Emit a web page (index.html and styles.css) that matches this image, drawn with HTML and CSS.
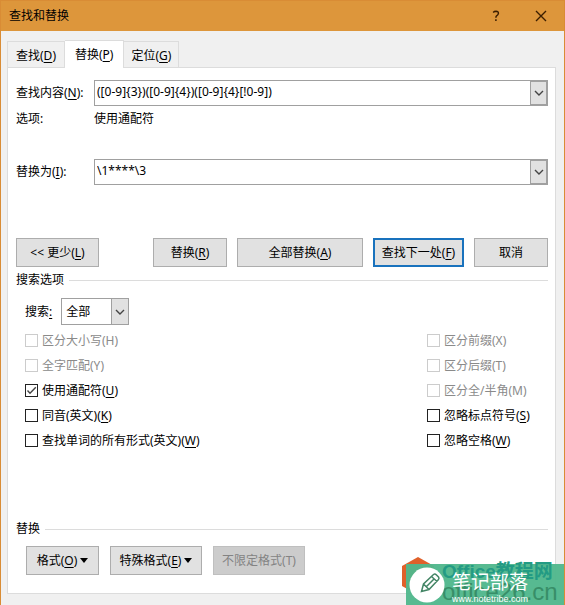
FILE: index.html
```html
<!DOCTYPE html>
<html lang="zh-CN">
<head>
<meta charset="utf-8">
<title>查找和替换</title>
<link rel="stylesheet" href="styles.css">
</head>
<body>
<main class="dialog">
  <header class="titlebar">
    <h1 class="title">查找和替换</h1>
    <button class="caption help" type="button" aria-label="帮助"><svg width="8" height="12" viewBox="0 0 8 12"><path d="M1.200 2.400Q2.200 1.200 4 1.200Q6.500 1.300 6.400 3.500Q6.200 4.800 4.600 5.800Q3.900 6.400 3.900 7.800M3.900 9.200V11"/></svg></button>
    <button class="caption close" type="button" aria-label="关闭"><svg width="12" height="12" viewBox="0 0 12 12"><path d="M1 1L11 11M11 1L1 11"/></svg></button>
  </header>
  <div class="content">
    <nav class="tabs">
      <button class="tab" type="button">查找(<u>D</u>)</button>
      <button class="tab active" type="button">替换(<u>P</u>)</button>
      <button class="tab" type="button">定位(<u>G</u>)</button>
    </nav>
    <form class="panel">
      <div class="field">
        <label for="find">查找内容(<u>N</u>):</label>
        <div class="combo">
          <input id="find" type="text" value="([0-9]{3})([0-9]{4})([0-9]{4}[!0-9])">
          <button class="drop" type="button" aria-label="查找历史"><svg width="10" height="6" viewBox="0 0 10 6"><path d="M1 1L5 5L9 1"/></svg></button>
        </div>
      </div>
      <div class="field info"><span>选项:</span><span>使用通配符</span></div>
      <div class="field replace">
        <label for="replace">替换为(<u>I</u>):</label>
        <div class="combo">
          <input id="replace" type="text" value="\1****\3">
          <button class="drop" type="button" aria-label="替换历史"><svg width="10" height="6" viewBox="0 0 10 6"><path d="M1 1L5 5L9 1"/></svg></button>
        </div>
      </div>
      <div class="actions">
        <button class="btn less" type="button">&lt;&lt; 更少(<u>L</u>)</button>
        <button class="btn small" type="button">替换(<u>R</u>)</button>
        <button class="btn wide" type="button">全部替换(<u>A</u>)</button>
        <button class="btn next" type="button">查找下一处(<u>F</u>)</button>
        <button class="btn small" type="button">取消</button>
      </div>
      <h2 class="section">搜索选项</h2>
      <div class="search">
        <label for="scope">搜索<u>:</u></label>
        <div class="select">
          <select id="scope"><option>全部</option></select>
          <span class="drop"><svg width="10" height="6" viewBox="0 0 10 6"><path d="M1 1L5 5L9 1"/></svg></span>
        </div>
      </div>
      <div class="options">
        <div class="column">
          <label class="check off"><input type="checkbox" disabled><span>区分大小写(H)</span></label>
          <label class="check off"><input type="checkbox" disabled><span>全字匹配(Y)</span></label>
          <label class="check"><input type="checkbox" checked><svg class="tick" width="13" height="13" viewBox="0 0 13 13"><path d="M2.500 6.500L5 9.200L10.800 3.200"/></svg><span>使用通配符(<u>U</u>)</span></label>
          <label class="check"><input type="checkbox"><span>同音(英文)(<u>K</u>)</span></label>
          <label class="check"><input type="checkbox"><span>查找单词的所有形式(英文)(<u>W</u>)</span></label>
        </div>
        <div class="column right">
          <label class="check off"><input type="checkbox" disabled><span>区分前缀(X)</span></label>
          <label class="check off"><input type="checkbox" disabled><span>区分后缀(T)</span></label>
          <label class="check off"><input type="checkbox" disabled><span>区分全/半角(M)</span></label>
          <label class="check"><input type="checkbox"><span>忽略标点符号(<u>S</u>)</span></label>
          <label class="check"><input type="checkbox"><span>忽略空格(<u>W</u>)</span></label>
        </div>
      </div>
      <h2 class="section format-title">替换</h2>
      <div class="formats">
        <button class="btn format" type="button"><span>格式(<u>O</u>)</span><svg width="8" height="5" viewBox="0 0 8 5"><path class="solid" d="M0 0H8L4 5Z"/></svg></button>
        <button class="btn special" type="button"><span>特殊格式(<u>E</u>)</span><svg width="8" height="5" viewBox="0 0 8 5"><path class="solid" d="M0 0H8L4 5Z"/></svg></button>
        <button class="btn special" type="button" disabled>不限定格式(T)</button>
      </div>
    </form>
  </div>
  <aside class="watermark">
    <svg class="hex" width="32" height="38" viewBox="0 0 32 38"><path d="M16 0L32 9V29L16 38L0 29V9Z"/></svg>
    <div class="band"></div>
    <div class="under"><span class="office">Office教程网</span><span class="domain">office26.cn</span></div>
    <svg class="pencil" width="36" height="36" viewBox="0 0 36 36"><circle cx="18" cy="18" r="17.500"/><path d="M12.500 24.500L14.500 17L24.500 7.500Q26 6.500 27.500 8L29.500 10Q30.500 11.500 29.500 12.500L20 22.500ZM14.500 17L20 22.500M22.500 9.500L28 14.500M17.500 19.500L25 12"/></svg>
    <div class="brand"><strong>笔记部落</strong><span>www.notetribe.com</span></div>
  </aside>
</main>
</body>
</html>
```
FILE: styles.css
```css
* { box-sizing: border-box; }
body {
  margin: 0;
  color: #000;
  font: 12px/18px "Noto Sans", "Noto Sans CJK SC", sans-serif;
}
button, input, select { font: inherit; color: inherit; margin: 0; }
h1, h2 { margin: 0; font-size: 12px; font-weight: 400; }
u { text-underline-offset: 2px; }
svg { fill: none; stroke: #444; flex: none; }
.dialog {
  position: relative;
  min-height: 100vh;
  display: flex;
  flex-direction: column;
  background: #f0f0f0;
  border: 1px solid #d98c35;
  overflow: hidden;
}
.titlebar {
  display: flex;
  align-items: center;
  height: 30px;
  padding: 0 11px 0 8px;
  background: #dd963b;
}
.title { flex: 1; }
.caption {
  display: grid;
  place-items: center;
  width: 24px;
  height: 24px;
  padding: 0;
  border: 0;
  background: none;
}
.caption svg { stroke: #3c1e00; }
.help { margin-right: 21px; }
.help svg { stroke-width: 1.500; }
.close svg { stroke-width: 1.400; }
.content {
  flex: 1;
  display: flex;
  flex-direction: column;
  padding: 9px 8px 11px 6px;
}
.tabs { display: flex; align-items: flex-end; }
.tab {
  height: 26px;
  padding: 2px 7px 0;
  border: 1px solid #dcdcdc;
  border-width: 1px 1px 0 0;
  background: #f0f0f0;
}
.tab:first-child { border-left-width: 1px; padding: 2px 8px 0; }
.tab.active {
  z-index: 1;
  height: 28px;
  margin-bottom: -1px;
  padding: 0 10px;
  background: #fff;
}
.panel {
  flex: 1;
  padding: 12px 7px 18px 8px;
  background: #fff;
  border: 1px solid #dcdcdc;
}
.field {
  display: grid;
  grid-template-columns: 78px 1fr;
  align-items: center;
}
.info { margin: 4px 0 31px; }
.combo {
  display: flex;
  height: 26px;
  border: 1px solid #a0a0a0;
}
.combo input {
  flex: 1;
  min-width: 0;
  padding: 0 2px 2px;
  border: 0;
  outline: 0;
  background: #fff;
}
.drop {
  display: grid;
  place-items: center;
  width: 17px;
  padding: 0;
  border: 1px solid #a0a0a0;
  background: #e1e1e1;
}
.drop svg { stroke-width: 1.400; }
.actions {
  display: flex;
  gap: 10px;
  margin-top: 53px;
}
.btn {
  height: 29px;
  padding: 0;
  border: 1px solid #adadad;
  background: #e1e1e1;
}
.less { width: 83px; margin-right: auto; }
.small { width: 74px; }
.wide { width: 126px; }
.next { width: 91px; border: 2px solid #1972bd; }
.section {
  display: flex;
  align-items: center;
  gap: 5px;
  margin-top: 4px;
}
.section::after {
  content: "";
  flex: 1;
  height: 1px;
  background: #dcdcdc;
}
.search {
  display: flex;
  align-items: center;
  gap: 9px;
  margin: 9px 0 0 9px;
}
.select {
  display: grid;
  grid-template-columns: 1fr 17px;
  width: 68px;
  height: 27px;
  border: 1px solid #a0a0a0;
}
.select select {
  grid-area: 1 / 1 / 2 / 3;
  appearance: none;
  padding: 0 4px;
  border: 0;
  background: #fff;
}
.select .drop {
  grid-area: 1 / 2;
  border-width: 0 0 0 1px;
  pointer-events: none;
}
.options {
  display: flex;
  justify-content: space-between;
  margin: 3px 0 0 9px;
}
.column { display: grid; grid-auto-rows: 25px; }
.right { width: 121px; }
.check {
  position: relative;
  display: flex;
  align-items: center;
  gap: 4px;
  white-space: nowrap;
}
.check input {
  appearance: none;
  width: 13px;
  height: 13px;
  border: 1px solid #222;
  background: #fff;
}
.off { color: #8a8a8a; }
.off input { border-color: #ccc; }
.tick { position: absolute; left: 0; top: 6px; stroke-width: 1.400; }
.format-title { margin-top: 67px; }
.formats {
  display: flex;
  gap: 11px;
  margin: 8px 0 0 10px;
}
.formats .btn {
  display: flex;
  align-items: center;
  justify-content: center;
  gap: 3px;
}
.format { width: 73px; }
.special { width: 92px; }
.btn:disabled { background: #ccc; border-color: #bfbfbf; color: #838383; }
.solid { fill: #000; stroke: none; }
.watermark {
  position: absolute;
  right: -1px;
  bottom: -1px;
  width: 163px;
  height: 49px;
}
.watermark > * { position: absolute; }
.hex { left: 0; top: 0; }
.hex path { fill: #e0602a; stroke: none; }
.band { inset: 7px 0 0 4px; background: #50b78d; opacity: 0.96; }
.under {
  left: 40px;
  top: 5px;
  display: flex;
  flex-direction: column;
  font-family: "Liberation Sans", "Noto Sans CJK SC", sans-serif;
  font-size: 19px;
  line-height: 20px;
  white-space: nowrap;
}
.office { color: #239b84; font-weight: 700; }
.domain { color: #388e68; font-size: 24px; }
.pencil { left: 7px; top: 10px; }
.pencil circle { fill: #fff; stroke: none; }
.pencil path { stroke: #438565; stroke-width: 1.500; }
.brand {
  left: 50px;
  top: 15px;
  display: flex;
  flex-direction: column;
  color: #fff;
  font-family: "Liberation Sans", "Noto Sans CJK SC", sans-serif;
}
.brand strong { font-size: 19px; font-weight: 400; line-height: 22px; }
.brand span { font-size: 9px; line-height: 10px; }
```
